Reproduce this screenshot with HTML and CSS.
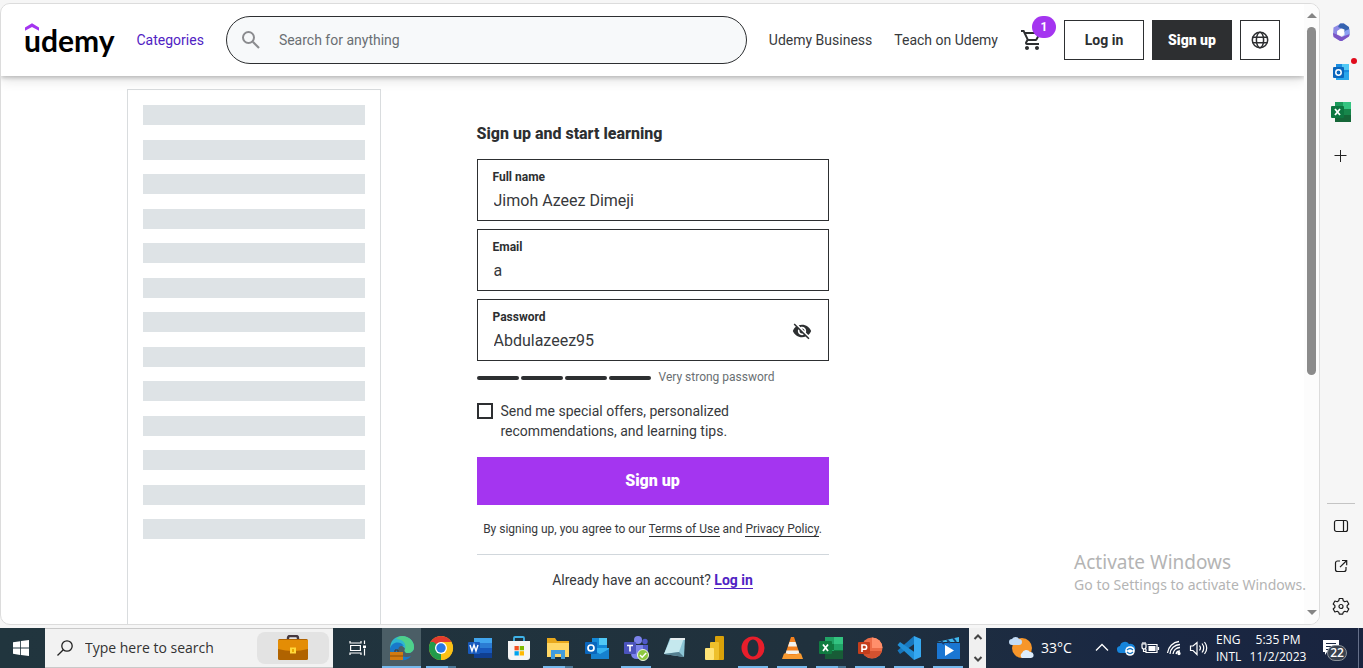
FILE: index.html
```html
<!DOCTYPE html>
<html lang="en">
<head>
<meta charset="utf-8">
<title>Sign up and start learning | Udemy</title>
<link rel="stylesheet" href="styles.css">
</head>
<body>
<div class="browser">
  <div class="window">
    <div class="page">
      <header class="header">
        <a class="logo" href="#" aria-label="Udemy"><svg class="logo-hat" viewBox="0 0 14 8"><path d="M0 4.500 7 .3l7 4.200v3.300L7 4 0 7.800z" fill="#a435f0"/></svg>udemy</a>
        <a class="categories" href="#">Categories</a>
        <form class="search">
          <button class="search-btn" type="button" aria-label="Search"><svg viewBox="0 0 24 24"><circle cx="9.500" cy="9.500" r="5.500" fill="none" stroke="#8b8c8f" stroke-width="2"/><path d="M13.800 13.800 20 20" stroke="#8b8c8f" stroke-width="2.200"/></svg></button>
          <input class="search-input" type="text" placeholder="Search for anything" aria-label="Search for anything">
        </form>
        <a class="nav-link" href="#">Udemy Business</a>
        <a class="nav-link" href="#">Teach on Udemy</a>
        <div class="actions">
          <a class="cart" href="#" aria-label="Cart"><svg viewBox="0 0 24 24" fill="#2d2f31"><path d="M15.550 13c.75 0 1.410-.41 1.750-1.030l3.580-6.490A.996.996 0 0 0 20.010 4H5.210l-.94-2H1v2h2l3.600 7.590-1.350 2.440C4.520 15.370 5.480 17 7 17h12v-2H7l1.100-2h7.450zM6.160 6h12.150l-2.760 5H8.530L6.160 6zM7 18c-1.100 0-1.990.9-1.990 2S5.900 22 7 22s2-.9 2-2-.9-2-2-2zm10 0c-1.100 0-1.990.9-1.990 2s.89 2 1.990 2 2-.9 2-2-.9-2-2-2z"/></svg><span class="cart-count">1</span></a>
          <button class="btn btn-outline" type="button">Log in</button>
          <button class="btn btn-dark" type="button">Sign up</button>
          <button class="btn btn-outline btn-square" type="button" aria-label="Choose a language"><svg viewBox="0 0 20 20" fill="none" stroke="#2d2f31" stroke-width="1.500"><circle cx="10" cy="10" r="7.700"/><ellipse cx="10" cy="10" rx="3.600" ry="7.700"/><path d="M2.800 7.300h14.400M2.800 12.700h14.400"/></svg></button>
        </div>
      </header>
      <main class="main">
        <aside class="skeleton" aria-hidden="true">
          <div class="bars"><i></i><i></i><i></i><i></i><i></i><i></i><i></i><i></i><i></i><i></i><i></i><i></i><i></i></div>
        </aside>
        <section class="signup">
          <h1 class="title">Sign up and start learning</h1>
          <form>
            <div class="field"><label for="name">Full name</label><input id="name" type="text" value="Jimoh Azeez Dimeji"></div>
            <div class="field"><label for="email">Email</label><input id="email" type="text" value="a"></div>
            <div class="field field-password">
              <div class="field-body"><label for="password">Password</label><input id="password" type="text" value="Abdulazeez95"></div>
              <button class="eye" type="button" aria-label="Hide password"><svg viewBox="0 0 24 24" fill="#2d2f31"><path d="M12 7c2.760 0 5 2.240 5 5 0 .65-.13 1.260-.36 1.830l2.920 2.920c1.510-1.260 2.700-2.890 3.430-4.750-1.730-4.390-6-7.500-11-7.500-1.400 0-2.740.25-3.980.7l2.160 2.160C10.740 7.130 11.350 7 12 7zM2 4.270l2.280 2.280.46.46C3.080 8.300 1.780 10.020 1 12c1.730 4.390 6 7.500 11 7.500 1.550 0 3.030-.3 4.380-.84l.42.42L19.730 22 21 20.730 3.270 3 2 4.270zM7.530 9.800l1.550 1.550c-.05.21-.08.43-.08.65 0 1.660 1.340 3 3 3 .22 0 .44-.03.65-.08l1.550 1.550c-.67.33-1.410.53-2.200.53-2.760 0-5-2.240-5-5 0-.79.2-1.530.53-2.200zm4.310-.78 3.150 3.150.02-.16c0-1.660-1.340-3-3-3l-.17.01z"/></svg></button>
            </div>
            <div class="strength"><i></i><i></i><i></i><i></i><span>Very strong password</span></div>
            <label class="offers" for="offers"><input id="offers" type="checkbox"><span>Send me special offers, personalized recommendations, and learning tips.</span></label>
            <button class="submit" type="button">Sign up</button>
          </form>
          <p class="terms">By signing up, you agree to our <a href="#">Terms of Use</a> and <a href="#">Privacy Policy</a>.</p>
          <p class="account">Already have an account? <a href="#">Log in</a></p>
        </section>
      </main>
    </div>
    <div class="scrollbar"><i class="arrow-up"></i><i class="thumb"></i><i class="arrow-down"></i></div>
  </div>
  <nav class="sidebar">
    <div class="side-group side-top">
      <svg viewBox="0 0 20 20"><path d="M10 1.500 2.500 5.500 2 13l4 3.500V9l7-4V1.500z" fill="#8f8be6"/><path d="M9 1.500h4l5 3.500.5 7.500-5-2.500V7.500L7 5z" fill="#3563b0"/><path d="M18.500 7v6.500L11 19l-4.500-1.500L13.500 13V9z" fill="#8ba0f2"/><path d="M2 11l5 2 4 2 7.500-3-.5 2.500L11 19H9l-6.500-4z" fill="#7b55c6"/><circle cx="10" cy="10.200" r="3" fill="#fff"/></svg>
      <svg viewBox="0 0 20 20"><path d="M5 2h13v16H5z" fill="#1a8de0"/><path d="M11 2h7v6h-7z" fill="#50c8f5"/><path d="m5 11 13-1v8H5z" fill="#29a6ec"/><rect x="2" y="5" width="11" height="11" rx="1" fill="#0a66bd"/><circle cx="7.500" cy="10.500" r="2.700" fill="none" stroke="#fff" stroke-width="1.500"/></svg>
      <svg viewBox="0 0 20 20"><path d="M4 0h16v20H4z" fill="#1b9b5b"/><path d="M12 0h8v7h-8z" fill="#35c481"/><path d="M12 7h8v6h-8z" fill="#17864b"/><path d="M4 13h16v7H4z" fill="#156638"/><rect y="4" width="13" height="12" rx="1" fill="#0d7741"/><path d="m4 7 5 6M9 7l-5 6" stroke="#fff" stroke-width="1.800"/></svg>
      <svg class="plus" viewBox="0 0 20 20"><path d="M9.500 4v12M3.500 9.500h12" stroke="#222" stroke-width="1"/></svg>
    </div>
    <div class="side-group side-bottom">
      <svg viewBox="0 0 20 20" fill="none" stroke="#1b1b1b" stroke-width="1.200"><rect x="3.500" y="4.500" width="13" height="11" rx="2"/><path d="M12.500 4.500v11"/></svg>
      <svg viewBox="0 0 20 20" fill="none" stroke="#1b1b1b" stroke-width="1.200"><path d="M9 5H6.500a2 2 0 0 0-2 2v6.500a2 2 0 0 0 2 2H13a2 2 0 0 0 2-2V11M11 4.500h4.700v4.700M15.700 4.500 9 11.200"/></svg>
      <svg viewBox="0 0 20 20" fill="none" stroke="#1b1b1b" stroke-width="1.200" stroke-linejoin="round"><path d="m8.300 2.500h3.400l.6 2.300 1.500.9 2.300-.7 1.700 3-1.700 1.600v1.800l1.700 1.600-1.700 3-2.300-.7-1.500.9-.6 2H8.300l-.6-2-1.500-.9-2.300.7-1.700-3 1.700-1.600V9.600L2.200 8l1.700-3 2.300.7 1.500-.9z"/><circle cx="10" cy="10.500" r="2"/></svg>
    </div>
  </nav>
  <div class="watermark"><p class="wm-title">Activate Windows</p><p class="wm-text">Go to Settings to activate Windows.</p></div>
</div>
<footer class="taskbar">
  <button class="start" type="button" aria-label="Start"><svg viewBox="0 0 16 16" fill="#fff"><path d="M0 2.300 7.200 1.200v6.400H0zM8 1.100 16 0v7.600H8zM0 8.400h7.200v6.500L0 13.800zM8 8.400h8V16l-8-1z"/></svg></button>
  <div class="task-search">
    <svg class="lens" viewBox="0 0 16 16" fill="none" stroke="#222" stroke-width="1.300"><circle cx="10" cy="6" r="5.200"/><path d="M6.300 9.700.5 15.500"/></svg>
    <input type="text" placeholder="Type here to search" aria-label="Type here to search">
    <span class="briefcase"><svg viewBox="0 0 32 26"><path d="M11 6V3q0-2 2-2h6q2 0 2 2v3" fill="none" stroke="#453840" stroke-width="2.400"/><rect x="1" y="4" width="30" height="21" rx="1.500" fill="#b06300"/><path d="M1 5h30v9q-15 4-30 0z" fill="#e48d05"/><rect x="13" y="12.500" width="6" height="6" fill="#ffd83a"/><rect x="15" y="14" width="2" height="3" fill="#e9a800"/></svg></span>
  </div>
  <button class="task-view" type="button" aria-label="Task view"><svg viewBox="0 0 18 18" fill="none" stroke="#fff" stroke-width="1.200"><path d="M1 2v2h11V2M1 16v-2h11v2M1.600 6.500h9.800v5H1.600zM15.500 1.500v3.500M15.500 9.500v7"/><path d="M14 6.500h3v2.500h-3z" fill="#fff" stroke="none"/></svg></button>
  <div class="apps">
    <span class="app active"><svg viewBox="0 0 26 26"><path d="M1 14C1 6 6 1 13 1s12 5 12 11c0 4-3 6-6 6s-4-2-3-4c-1-4-10-6-15 0z" fill="#2fb6cf"/><path d="M13 1c7 0 12 5 12 11 0 4-3 6-6 6s-4-2-3-4c2-6-3-10-9-10 2-2 4-3 6-3z" fill="#4fd08a"/><path d="M1 14c1-7 10-9 14-3-5-1-7 3-5 7s8 5 12 3c-3 4-7 5-10 4C5 24 1 20 1 14z" fill="#1979ca"/><path d="M1 17h13v8H1z" fill="#d17a10"/><path d="M1 20.500h13v1H1z" fill="#8a4c04"/><path d="M6 17v-2h3v2" fill="none" stroke="#4c3420"/></svg></span>
    <span class="app open multi"><svg viewBox="0 0 26 26"><circle cx="13" cy="13" r="12" fill="#fbc116"/><path d="M13 13 2.600 7A12 12 0 0 1 23.400 7z" fill="#e33b2e"/><path d="M13 13 13 25A12 12 0 0 1 2.600 7z" fill="#229a4a"/><path d="M2.600 7h3L13 13l-6 3z" fill="#229a4a"/><path d="M13 7h10.400A12 12 0 0 1 13 25l6-9z" fill="#fbc116"/><circle cx="13" cy="13" r="6" fill="#fff"/><circle cx="13" cy="13" r="4.700" fill="#2878e4"/></svg></span>
    <span class="app"><svg viewBox="0 0 26 26"><path d="M7 3h18v6H7z" fill="#41a5ee"/><path d="M7 8h18v5H7z" fill="#2b7cd3"/><path d="M7 13h18v5H7z" fill="#185abd"/><path d="M7 18h18v5H7z" fill="#103f91"/><rect x="1" y="7" width="12" height="12" rx="1" fill="#185abd"/><path d="m3 10 2 6 2-6 2 6 2-6" fill="none" stroke="#fff" stroke-width="1.400"/></svg></span>
    <span class="app"><svg viewBox="0 0 26 26"><path d="M8 7V3q0-1 1-1h8q1 0 1 1v4" fill="none" stroke="#3fb3e8" stroke-width="1.800"/><path d="M2 6h22v16q0 3-3 3H5q-3 0-3-3z" fill="#f5f5f5"/><path d="M8.500 11h4.300v4.300H8.500z" fill="#f25022"/><path d="M13.700 11H18v4.300h-4.300z" fill="#7fba00"/><path d="M8.500 16.200h4.300v4.300H8.500z" fill="#00a4ef"/><path d="M13.700 16.200H18v4.300h-4.300z" fill="#ffb900"/></svg></span>
    <span class="app open multi"><svg viewBox="0 0 26 26"><path d="M2 3h8l2 3h12v6H2z" fill="#e8a81c"/><path d="M2 8h22v14H2z" fill="#ffd766"/><path d="M6 24v-9h14v9h-4v-5h-6v5z" fill="#429cdc"/></svg></span>
    <span class="app"><svg viewBox="0 0 26 26"><path d="M8 3h15v13H8z" fill="#1489d8"/><path d="M15 3h8v7h-8z" fill="#50c8f5"/><path d="M7 13h18v11H7z" fill="#35b2f0"/><path d="m7 14 9 5 9-5v10H7z" fill="#1680ce"/><rect x="1" y="7" width="12" height="12" rx="1" fill="#0a66bd"/><circle cx="7" cy="13" r="3" fill="none" stroke="#fff" stroke-width="1.700"/></svg></span>
    <span class="app open"><svg viewBox="0 0 26 26"><circle cx="15" cy="5" r="4" fill="#7b83eb"/><circle cx="22" cy="6.500" r="2.700" fill="#5059c9"/><path d="M17 10h8v7q0 4-4 4z" fill="#5059c9"/><path d="M8 10h12v8q0 6-6 6t-6-6z" fill="#7b83eb"/><rect x="1" y="7" width="12" height="12" rx="1" fill="#4b53bc"/><path d="M4 10.500h6M7 10.500v6" stroke="#fff" stroke-width="1.600"/><circle cx="20" cy="20" r="5.500" fill="#8dc83f" stroke="#eef7df"/><path d="m17 20 2.200 2.200 4-4.200" fill="none" stroke="#fff" stroke-width="1.500"/></svg></span>
    <span class="app"><svg viewBox="0 0 26 26"><path d="M8 3h15l-1 19-20-3z" fill="#8cc5d5"/><path d="M9 3h13l-5 14-15 2z" fill="#c5e8ee"/><path d="m2 19 15-2 5 5z" fill="#557f90"/><path d="M9 3h14v2H8z" fill="#e7edef"/></svg></span>
    <span class="app"><svg viewBox="0 0 26 26"><rect x="14" y="1" width="9" height="24" rx="1" fill="#d9a109"/><rect x="9" y="7" width="9" height="18" rx="1" fill="#eec02c"/><rect x="4" y="13" width="9" height="12" rx="1" fill="#ffe477"/></svg></span>
    <span class="app open"><svg viewBox="0 0 26 26"><path fill-rule="evenodd" d="M13 1.500a11.500 11.500 0 1 1 0 23 11.500 11.500 0 0 1 0-23zm0 3c-3.500 0-5.500 4-5.500 8.500s2 8.500 5.500 8.500 5.500-4 5.500-8.500-2-8.500-5.500-8.500z" fill="#e81e2b"/></svg></span>
    <span class="app open"><svg viewBox="0 0 26 26"><path d="m12 2h3l6 18H6z" fill="#f4811e"/><path d="m10.500 7h6l1.500 4.500H9zM7.500 15.500h12L20.500 19h-14z" fill="#f2f2ee"/><path d="M5 18.500h3q5 3 11 0h3l2 5.500H3z" fill="#f89a30"/></svg></span>
    <span class="app open multi"><svg viewBox="0 0 26 26"><path d="M7 2h18v22H7z" fill="#21a366"/><path d="M16 2h9v7h-9z" fill="#33c481"/><path d="M7 9h9v6H7zM16 15h9v9h-9z" fill="#107c41"/><path d="M7 16h18v8H7z" fill="#185c37"/><rect x="1" y="6" width="13" height="13" rx="1" fill="#107c41"/><path d="m5 9.500 5 6.500M10 9.500 5 16" stroke="#fff" stroke-width="1.800"/></svg></span>
    <span class="app open"><svg viewBox="0 0 26 26"><circle cx="15" cy="13" r="10.500" fill="#ed6c47"/><path d="M15 2.500A10.500 10.500 0 0 1 25.500 13H15z" fill="#ff8f6b"/><path d="M5 16h20a10.500 10.500 0 0 1-20 0z" fill="#d35230"/><rect x="1" y="7" width="12" height="12" rx="1" fill="#c43e1c"/><path d="M5 17v-7h2.500a2 2 0 0 1 0 4.300H5" fill="none" stroke="#fff" stroke-width="1.600"/></svg></span>
    <span class="app open"><svg viewBox="0 0 26 26"><path d="M18 1 1.500 15.500 4 19 19 8.500z" fill="#1878be"/><path d="M1.500 10 4 7l15 10.500L18 25z" fill="#2190d8"/><path d="m18 1 7 3v18l-7 3z" fill="#35a8f0"/></svg></span>
    <span class="app open"><svg viewBox="0 0 26 26"><path d="M2 7 24 2v5H2z" fill="#41b9ee"/><path d="M2 8h23v16H2z" fill="#1a76d2"/><path d="m6 6 3 3m3-4 3 3m3-5 3 4" stroke="#173f72" stroke-width="2"/><path d="m10 10 9 5.500-9 5.500z" fill="#fff"/></svg></span>
  </div>
  <div class="overflow"><svg viewBox="0 0 10 6"><path d="m1.500 5 3.500-3.500L8.500 5"/></svg><svg viewBox="0 0 10 6"><path d="m1.500 1 3.500 3.500L8.500 1"/></svg></div>
  <div class="tray">
    <svg class="weather" viewBox="0 0 26 24"><circle cx="14" cy="12" r="10" fill="#f7962a"/><path d="M4 9a3 3 0 0 1 0-6 4 4 0 0 1 7 0 3 3 0 0 1 0 6z" fill="#c4dcf5"/><path d="M14 22a3 3 0 0 1 0-5 4.500 4.500 0 0 1 8-1 3 3 0 0 1 1 6z" fill="#dcecfb"/></svg>
    <span class="temp">33°C</span>
    <div class="status">
      <svg viewBox="0 0 24 20" fill="none" stroke="#fff" stroke-width="1.300"><path d="m6 12.500 6-6 6 6"/></svg>
      <svg viewBox="0 0 24 20"><path d="M7 15a3.500 3.500 0 0 1-1-7 5 5 0 0 1 9-2 4.500 4.500 0 0 1 3 9z" fill="#1685dc"/><circle cx="16" cy="13" r="4.800" fill="#fff"/><path d="M13 12q3-3 6 0M19 14q-3 3-6 0" fill="none" stroke="#1676c4" stroke-width="1.200"/></svg>
      <svg viewBox="0 0 24 20" fill="none" stroke="#fff" stroke-width="1.200"><path d="M9.500 6.500H19v8H8V11M20.500 9v3M5.500 11v2.500H8M4 6v3q0 2 2 2t2-2V6zM5 6V4M7 6V4"/><path d="M10.500 8h7v5h-7z" fill="#fff" stroke="none"/></svg>
      <svg viewBox="0 0 24 20" fill="none" stroke="#fff" stroke-width="1.300"><path d="M14 16a4 4 0 0 1 4-3M11 16a7 7 0 0 1 7-6.500M8 16A10 10 0 0 1 18 6.500M5.500 15A13 13 0 0 1 17 3.500"/><circle cx="17" cy="15.500" r="1" fill="#fff"/></svg>
      <svg viewBox="0 0 24 20" fill="none" stroke="#fff" stroke-width="1.200"><path d="M4.500 8v4.500H7l4 4v-12l-4 3.500zM13.500 7.500q2 2.500 0 5M16 5.500q3.500 4.500 0 9M18.500 4q4.500 6 0 12"/></svg>
    </div>
    <div class="stack lang"><span>ENG</span><span>INTL</span></div>
    <div class="stack clock"><span>5:35 PM</span><span>11/2/2023</span></div>
    <div class="notice"><svg viewBox="0 0 18 16"><path d="M1 0h16v12H5l-2 3v-3H1z" fill="#fff"/><path d="M4 3.500h10M4 6.500h10M4 9.500h6" stroke="#1a2843"/></svg><span class="notice-count">22</span></div>
    <i class="edge"></i>
  </div>
</footer>
</body>
</html>
```
FILE: styles.css
```css
* { box-sizing: border-box; }
body { margin: 0; height: 100vh; display: flex; flex-direction: column; overflow: hidden; background: #f6f6f6; color: #37393c; font-family: Roboto, "Liberation Sans", sans-serif; font-size: 14px; line-height: 20px; }
button, input { font: inherit; color: inherit; }
button { padding: 0; border: 0; background: none; }
p, h1 { margin: 0; }
a { color: inherit; text-decoration: none; }
svg { display: block; flex: none; }

.browser { position: relative; flex: 1; min-height: 0; display: flex; padding: 3px 0; }
.window { flex: 1; display: flex; border: 1px solid #dcdcdc; border-radius: 10px; overflow: hidden; background: #fff; }
.page { flex: 1; min-width: 0; display: flex; flex-direction: column; overflow: hidden; }

.header { position: relative; flex: none; height: 72px; display: flex; align-items: center; gap: 22px; padding: 0 24px 0 23px; background: #fff; box-shadow: 0 2px 4px rgba(0,0,0,.2), 0 4px 12px rgba(0,0,0,.12); }
.logo { position: relative; color: #000; font-family: Lato, sans-serif; font-size: 30px; font-weight: 700; line-height: 36px; }
.logo-hat { position: absolute; left: 1px; top: 1px; width: 14px; height: 8px; }
.categories { color: #5022c3; }
.search { flex: 1; height: 48px; display: flex; align-items: center; border: 1px solid #2d2f31; border-radius: 24px; background: #f7f9fa; }
.search-btn { flex: none; width: 48px; }
.search-btn svg { width: 24px; height: 24px; margin: 0 auto; }
.search-input { flex: 1; min-width: 0; padding: 0 4px; border: 0; outline: 0; background: none; }
.search-input::placeholder { color: #6a6f73; opacity: 1; }
.actions { display: flex; align-items: center; gap: 8px; }
.cart { position: relative; margin-right: 12px; }
.cart svg { width: 24px; height: 24px; }
.cart-count { position: absolute; left: 12px; top: -12px; width: 24px; height: 22px; border-radius: 12px; background: #a435f0; color: #fff; font-size: 12px; font-weight: 700; line-height: 22px; text-align: center; }
.btn { width: 80px; height: 40px; color: #2d2f31; font-weight: 700; }
.btn-outline { border: 1px solid #2d2f31; background: #fff; }
.btn-dark { background: #2d2f31; color: #fff; font-weight: 900; }
.btn-square { width: 40px; }
.btn-square svg { width: 20px; height: 20px; margin: 0 auto; }

.main { flex: 1; display: grid; grid-template-columns: 1fr 352px 1fr; }
.skeleton { justify-self: end; width: 254px; margin: 13px 96px 0 0; padding: 15px; border: 1px solid #d9dcde; border-bottom: 0; }
.bars { display: flex; flex-direction: column; justify-content: space-between; height: 434px; }
.bars i { height: 20px; background: #dee3e6; }
.signup { padding-top: 46px; }
.title { margin-bottom: 13px; color: #2d2f31; font-size: 16px; font-weight: 800; line-height: 24px; }
.field { margin-bottom: 8px; padding: 9px 15px 8px; border: 1px solid #2d2f31; }
.field label { display: block; margin-bottom: 3px; color: #2d2f31; font-size: 12px; font-weight: 700; line-height: 16px; }
.field input { display: block; width: 100%; height: 24px; padding: 0 1px; border: 0; outline: 0; background: none; font-size: 16px; }
.field-password { display: flex; align-items: center; padding-right: 16px; }
.field-body { flex: 1; }
.eye svg { width: 20px; height: 20px; }
.strength { display: flex; align-items: center; gap: 2px; font-size: 12px; line-height: 17px; }
.strength i { width: 42px; height: 4px; border-radius: 2px; background: #2d2f31; }
.strength span { margin-left: 6px; color: #6a6f73; }
.offers { display: flex; gap: 8px; width: 272px; margin: 15px 0 16px; }
.offers input { flex: none; appearance: none; width: 16px; height: 16px; margin: 2px 0; border: 2px solid #2d2f31; }
.submit { width: 100%; height: 48px; background: #a435f0; color: #fff; font-size: 16px; font-weight: 900; }
.terms { padding: 16px 0; border-bottom: 1px solid #d1d7dc; font-size: 12px; line-height: 17px; text-align: center; }
.terms a { border-bottom: 1px solid #2d2f31; }
.account { padding-top: 15px; text-align: center; }
.account a { border-bottom: 1px solid #5022c3; color: #5022c3; font-weight: 700; }

.scrollbar { width: 15px; display: flex; flex-direction: column; align-items: center; padding: 9px 0; background: #fcfcfc; }
.arrow-up, .arrow-down { border: 5px solid transparent; }
.arrow-up { border-top: 0; border-bottom-color: #858585; }
.arrow-down { margin-top: auto; border-bottom: 0; border-top-color: #858585; }
.thumb { width: 9px; height: 348px; margin-top: 9px; border-radius: 5px; background: #8b8b8b; }

.sidebar { width: 43px; display: flex; flex-direction: column; justify-content: space-between; align-items: center; padding: 19px 1px 9px 0; }
.side-group { display: flex; flex-direction: column; align-items: center; gap: 20px; }
.side-group svg { width: 20px; height: 20px; }
.side-group .plus { margin-top: 4px; }
.side-bottom { width: 28px; padding-top: 12px; border-top: 1px solid #c4c4c4; }
.side-top { position: relative; }
.side-top::after { content: ""; position: absolute; left: 20px; top: 36px; width: 6px; height: 6px; border-radius: 50%; background: #e00b1c; }
.watermark { position: absolute; right: 57px; bottom: 33px; color: #b4b4b4; font-family: "Noto Sans", "Open Sans", sans-serif; pointer-events: none; }
.wm-title { font-size: 19px; line-height: 25px; }
.wm-text { font-size: 14px; line-height: 20px; }

.taskbar { flex: none; height: 40px; display: flex; background: linear-gradient(90deg, #21353e, #20313d 60%, #1a2843 82%, #19243f); color: #fff; font-family: "Open Sans", "Noto Sans", sans-serif; font-size: 12px; }
.start { width: 45px; padding-right: 4px; }
.start svg { width: 16px; height: 16px; margin: 0 auto; }
.task-search { width: 288px; display: flex; align-items: center; padding: 0 4px 0 12px; border: solid #c9c9c9; border-width: 1px 0; background: #f2f2f2; }
.lens { width: 16px; height: 16px; }
.task-search input { flex: 1; min-width: 0; padding: 0 12px; border: 0; outline: 0; background: none; font-size: 14px; }
.task-search input::placeholder { color: #333; opacity: 1; }
.briefcase { width: 72px; height: 32px; display: grid; place-items: center; border-radius: 8px; background: #e3e3e3; }
.briefcase svg { width: 32px; height: 26px; }
.task-view { width: 49px; }
.task-view svg { width: 18px; height: 18px; margin: 0 auto; }
.apps { display: grid; grid-template-columns: repeat(15, 39px); }
.app { display: flex; align-items: center; justify-content: center; }
.app svg { width: 26px; height: 26px; }
.app.open { background: linear-gradient(#76b9ed, #76b9ed) bottom / 30px 2px no-repeat; }
.app.multi { background: linear-gradient(90deg, #76b9ed 22px, #4c7897 22px) bottom / 30px 2px no-repeat; }
.app.active { background: linear-gradient(#76b9ed, #76b9ed) bottom / 100% 2px no-repeat, #4b5e66; }
.overflow { width: 17px; margin-left: 2px; display: flex; flex-direction: column; justify-content: space-between; align-items: center; padding: 6px 0; background: #f0f0f0; }
.overflow svg { width: 10px; height: 6px; fill: none; stroke: #444; stroke-width: 2px; }
.tray { flex: 1; display: flex; align-items: center; padding-left: 22px; }
.weather { width: 26px; height: 24px; }
.temp { width: 49px; margin-left: 7px; font-size: 14px; }
.status { display: flex; }
.status svg { width: 24px; height: 20px; }
.stack { display: flex; flex-direction: column; line-height: 17px; }
.lang { width: 28px; margin-left: 6px; }
.clock { width: 60px; margin-left: 4px; align-items: center; }
.notice { position: relative; margin-left: 14px; }
.notice svg { width: 18px; height: 16px; }
.notice-count { position: absolute; left: 5px; top: 5px; width: 20px; height: 16px; border: 1px solid #8b929a; border-radius: 8px; background: #39424f; font-weight: 600; line-height: 14px; text-align: center; }
.edge { width: 1px; height: 40px; margin: 0 4px 0 auto; background: #66708a; }
```
